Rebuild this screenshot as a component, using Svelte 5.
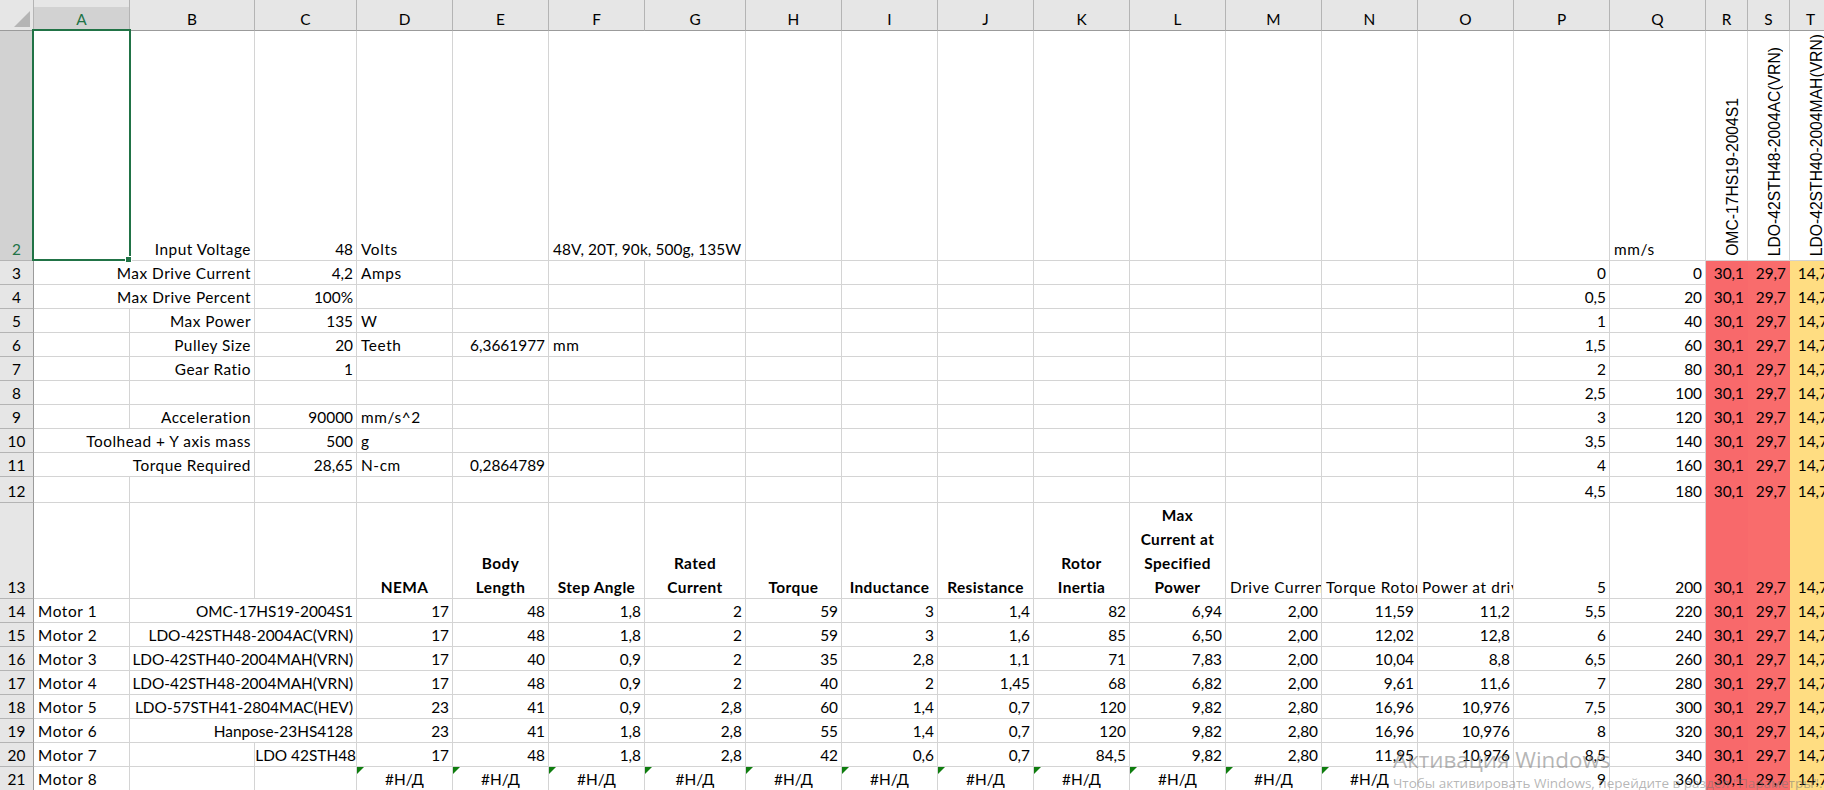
<script>
  const columns = [
    ["A", 96], ["B", 125], ["C", 102], ["D", 96], ["E", 96], ["F", 96], ["G", 101],
    ["H", 96], ["I", 96], ["J", 96], ["K", 96], ["L", 96], ["M", 96], ["N", 96],
    ["O", 96], ["P", 96], ["Q", 96], ["R", 42], ["S", 42], ["T", 42],
  ];
  const letters = columns.map((c) => c[0]);

  const left = (v, span = 1) => ({ v, kind: "left", span });
  const wide = (v) => ({ v, kind: "right", span: 2 });
  const label = (v, span = 1) => ({ v, kind: "right label", span });
  const head = (v) => ({ v, kind: "head" });
  const na = { v: "#Н/Д", kind: "na" };

  // one entry per motor: model, then the columns D to O
  function motor(n, model, values) {
    const row = { A: left("Motor " + n), B: wide(model) };
    values.forEach((v, i) => (row[letters[3 + i]] = v));
    return row;
  }

  const sheet = [
    { n: 2, h: 230, cells: {
      A: { v: "", kind: "selected" }, B: label("Input Voltage"), C: "48", D: left("Volts"),
      F: { v: "48V, 20T, 90k, 500g, 135W", kind: "plain", span: 2 }, Q: left("mm/s"),
      R: { v: "OMC-17HS19-2004S1", kind: "turned" },
      S: { v: "LDO-42STH48-2004AC(VRN)", kind: "turned" },
      T: { v: "LDO-42STH40-2004MAH(VRN)", kind: "turned" },
    } },
    { n: 3, h: 24, cells: { A: label("Max Drive Current", 2), C: "4,2", D: left("Amps") } },
    { n: 4, h: 24, cells: { A: label("Max Drive Percent", 2), C: "100%" } },
    { n: 5, h: 24, cells: { B: label("Max Power"), C: "135", D: left("W") } },
    { n: 6, h: 24, cells: { B: label("Pulley Size"), C: "20", D: left("Teeth"), E: "6,3661977", F: left("mm") } },
    { n: 7, h: 24, cells: { B: label("Gear Ratio"), C: "1" } },
    { n: 8, h: 24, cells: {} },
    { n: 9, h: 24, cells: { B: label("Acceleration"), C: "90000", D: left("mm/s^2") } },
    { n: 10, h: 24, cells: { A: label("Toolhead + Y axis mass", 2), C: "500", D: left("g") } },
    { n: 11, h: 24, cells: { A: label("Torque Required", 2), C: "28,65", D: left("N-cm"), E: "0,2864789" } },
    { n: 12, h: 26, cells: {} },
    { n: 13, h: 96, cells: {
      D: head("NEMA"), E: head("Body\nLength"), F: head("Step Angle"), G: head("Rated\nCurrent"),
      H: head("Torque"), I: head("Inductance"), J: head("Resistance"), K: head("Rotor\nInertia"),
      L: head("Max\nCurrent at\nSpecified\nPower"),
      M: left("Drive Current"), N: left("Torque Rotor"), O: left("Power at drive"),
    } },
    { n: 14, h: 24, cells: motor(1, "OMC-17HS19-2004S1", ["17", "48", "1,8", "2", "59", "3", "1,4", "82", "6,94", "2,00", "11,59", "11,2"]) },
    { n: 15, h: 24, cells: motor(2, "LDO-42STH48-2004AC(VRN)", ["17", "48", "1,8", "2", "59", "3", "1,6", "85", "6,50", "2,00", "12,02", "12,8"]) },
    { n: 16, h: 24, cells: motor(3, "LDO-42STH40-2004MAH(VRN)", ["17", "40", "0,9", "2", "35", "2,8", "1,1", "71", "7,83", "2,00", "10,04", "8,8"]) },
    { n: 17, h: 24, cells: motor(4, "LDO-42STH48-2004MAH(VRN)", ["17", "48", "0,9", "2", "40", "2", "1,45", "68", "6,82", "2,00", "9,61", "11,6"]) },
    { n: 18, h: 24, cells: motor(5, "LDO-57STH41-2804MAC(HEV)", ["23", "41", "0,9", "2,8", "60", "1,4", "0,7", "120", "9,82", "2,80", "16,96", "10,976"]) },
    { n: 19, h: 24, cells: motor(6, "Hanpose-23HS4128", ["23", "41", "1,8", "2,8", "55", "1,4", "0,7", "120", "9,82", "2,80", "16,96", "10,976"]) },
    { n: 20, h: 24, cells: {
      A: left("Motor 7"), C: { v: "LDO 42STH48", kind: "flush" },
      D: "17", E: "48", F: "1,8", G: "2,8", H: "42", I: "0,6", J: "0,7", K: "84,5", L: "9,82", M: "2,80", N: "11,95", O: "10,976",
    } },
    { n: 21, h: 24, cells: {
      A: left("Motor 8"), D: na, E: na, F: na, G: na, H: na, I: na, J: na, K: na, L: na, M: na, N: na,
    } },
  ];

  // speed table on the right runs from row 3 down
  sheet.slice(1).forEach((row, i) => {
    row.cells.P = String(i * 0.5).replace(".", ",");
    row.cells.Q = String(i * 20);
    row.cells.R = { v: "30,1", kind: "red" };
    row.cells.S = { v: "29,7", kind: "red2" };
    row.cells.T = { v: "14,7", kind: "amber" };
  });

  // expand a sparse row to a list of cells, skipping what a span covers
  function expand(cells) {
    const out = [];
    for (let i = 0; i < letters.length; i++) {
      const raw = cells[letters[i]];
      const cell = typeof raw === "string" ? { v: raw, kind: "right" } : raw || { v: "", kind: "right" };
      const span = cell.span || 1;
      out.push({ ...cell, span });
      i += span - 1;
    }
    return out;
  }

  const gridCols = "34px " + columns.map((c) => c[1] + "px").join(" ");
  const gridRows = "31px " + sheet.map((r) => r.h + "px").join(" ");
</script>

<div class="window">
  <div class="sheet" style="grid-template-columns: {gridCols}; grid-template-rows: {gridRows}">
    <div class="corner"><span class="tri-corner"></span></div>
    {#each columns as col}
      <div class="colhead" class:on={col[0] === "A"}>{col[0]}</div>
    {/each}

    {#each sheet as row}
      <div class="rowhead" class:on={row.n === 2}><span class="txt">{row.n}</span></div>
      {#each expand(row.cells) as cell}
        <div class="cell {cell.kind}" style="grid-column: span {cell.span}">
          {#if cell.kind === "turned"}
            <span class="turn">{cell.v}</span>
          {:else if cell.v}
            <span class="txt">{cell.v}</span>
          {/if}
        </div>
      {/each}
    {/each}
  </div>

  <div class="activate">
    <div class="big">Активация Windows</div>
    <div class="small">Чтобы активировать Windows, перейдите в раздел "Параметры".</div>
  </div>
</div>

<style>
  :global(body) {
    margin: 0;
    overflow: hidden;
    background: #fff;
  }

  .window {
    position: relative;
    width: 1824px;
    height: 790px;
    overflow: hidden;
    font-family: Lato, "Liberation Sans", sans-serif;
    font-size: 15.4px;
    color: #000;
  }

  .sheet {
    display: grid;
    width: max-content;
  }

  .txt {
    margin-bottom: -1px;
  }

  .corner {
    position: relative;
    background: #e6e6e6;
    border-right: 1px solid #b4b4b4;
    border-bottom: 1px solid #9b9b9b;
    box-sizing: border-box;
  }

  .tri-corner {
    position: absolute;
    left: 14px;
    top: 11px;
    width: 16px;
    height: 16px;
    background: #b5b5b5;
    clip-path: polygon(100% 0, 100% 100%, 0 100%);
  }

  .colhead {
    display: flex;
    align-items: center;
    justify-content: center;
    box-sizing: border-box;
    padding-top: 7px;
    font-size: 15.4px;
    background: #e6e6e6;
    border-right: 1px solid #b4b4b4;
    border-bottom: 1px solid #9b9b9b;
  }

  .colhead.on {
    background: linear-gradient(#e6e6e6 7px, #d2d2d2 7px);
    color: #217346;
  }

  .rowhead {
    display: flex;
    align-items: flex-end;
    justify-content: center;
    box-sizing: border-box;
    line-height: 23px;
    font-size: 15.4px;
    background: #e6e6e6;
    border-right: 1px solid #9b9b9b;
    border-bottom: 1px solid #b4b4b4;
  }

  .rowhead.on {
    background: #d2d2d2;
    color: #217346;
  }

  .cell {
    position: relative;
    display: flex;
    align-items: flex-end;
    box-sizing: border-box;
    min-width: 0;
    line-height: 23px;
    white-space: nowrap;
    border-right: 1px solid #d4d4d4;
    border-bottom: 1px solid #d4d4d4;
  }

  .right {
    justify-content: flex-end;
    padding-right: 3px;
  }

  .label {
    letter-spacing: 0.5px;
  }

  .left {
    padding-left: 4px;
    overflow: hidden;
    letter-spacing: 0.6px;
  }

  .plain {
    padding-left: 4px;
    letter-spacing: 0.1px;
  }

  .flush {
    justify-content: flex-end;
  }

  .head {
    justify-content: center;
    text-align: center;
    font-weight: 700;
    line-height: 24px;
    letter-spacing: 0.4px;
    white-space: pre-line;
  }

  .na {
    justify-content: center;
  }

  .na::before {
    content: "";
    position: absolute;
    left: 0;
    top: 0;
    width: 7px;
    height: 7px;
    background: #0e7d0e;
    clip-path: polygon(0 0, 100% 0, 0 100%);
  }

  .selected::after {
    content: "";
    position: absolute;
    left: -2px;
    top: -2px;
    right: -2px;
    bottom: -1px;
    border: 2px solid #217346;
  }

  .selected::before {
    content: "";
    position: absolute;
    right: -3px;
    bottom: -3px;
    width: 5px;
    height: 5px;
    background: #217346;
    border: 1px solid #fff;
    z-index: 1;
  }

  .turned {
    justify-content: flex-end;
    padding: 0 7px 4px 0;
  }

  .turn {
    writing-mode: vertical-rl;
    transform: rotate(180deg);
    font-family: "Liberation Sans", sans-serif;
    font-size: 15.7px;
    line-height: 14px;
  }

  .red,
  .red2,
  .amber {
    justify-content: flex-end;
    padding-right: 4px;
    border: none;
    line-height: 23px;
    padding-bottom: 1px;
  }

  .red {
    background: #f8696b;
  }

  .red2 {
    background: #f96c6c;
  }

  .amber {
    background: #ffdd82;
  }

  .activate {
    position: absolute;
    left: 1393px;
    top: 746px;
    white-space: nowrap;
    font-family: "Open Sans", sans-serif;
    color: rgba(120, 120, 120, 0.55);
  }

  .big {
    font-size: 22.4px;
    line-height: 28px;
  }

  .small {
    font-size: 13.5px;
    line-height: 18px;
  }
</style>
